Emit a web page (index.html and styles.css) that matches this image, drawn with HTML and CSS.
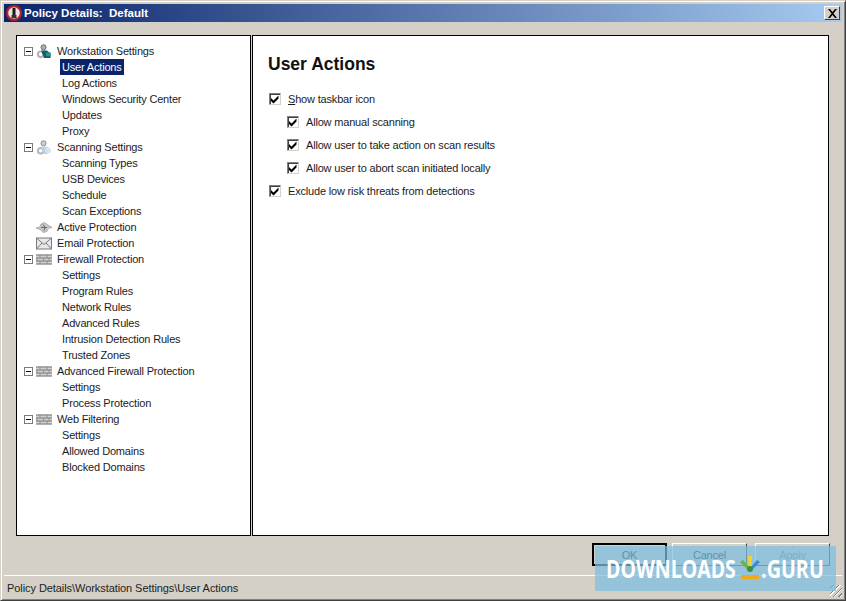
FILE: index.html
```html
<!DOCTYPE html>
<html lang="en">
<head>
<meta charset="utf-8">
<title>Policy Details: Default</title>
<link rel="stylesheet" href="styles.css">
</head>
<body>
<svg class="defs" width="0" height="0" aria-hidden="true">
  <defs>
    <symbol id="minus" viewBox="0 0 9 9"><rect x=".5" y=".5" width="8" height="8" fill="#fff" stroke="#7a7a7a"/><path d="M2 4.500h5" stroke="#000"/></symbol>
    <symbol id="gears-work" viewBox="0 0 16 16">
      <circle cx="4.500" cy="11" r="3" fill="#fff" stroke="#b4b4b4" stroke-width="2.200"/>
      <circle cx="7.500" cy="3.500" r="2.700" fill="#b0b0b0" stroke="#666"/>
      <path d="M5 7h6l4 3v5H8z" fill="#0f5f66"/>
      <path d="M10 9h5v4h-5z" fill="#2c8c92"/>
    </symbol>
    <symbol id="gears-scan" viewBox="0 0 16 16">
      <circle cx="4.500" cy="11.500" r="3" fill="#fff" stroke="#b8b8b8" stroke-width="2.200"/>
      <circle cx="7.500" cy="3.500" r="2.700" fill="#cfcfcf" stroke="#888"/>
      <path d="M5 7h6l4 3v3l-4 2H8z" fill="#bcd2e4"/>
      <circle cx="12" cy="11" r="3" fill="#d4e4f2"/>
    </symbol>
    <symbol id="wall" viewBox="0 0 16 12">
      <rect x="0" y="1" width="16" height="10" fill="#d2d2d2"/>
      <path d="M0 1.500h16M0 4.500h16M0 7.500h16M0 10.500h16" stroke="#777" fill="none"/>
      <path d="M4 1v3M11 1v3M1 4.500v3M7.500 4.500v3M13 4.500v3M4 7.500v3M11 7.500v3" stroke="#8a8a8a" fill="none"/>
    </symbol>
  </defs>
</svg>
<div class="window">
  <header class="titlebar">
    <svg class="app-icon" width="16" height="16" viewBox="0 0 16 16"><circle cx="8" cy="8" r="8" fill="#b5222a"/><circle cx="8" cy="8" r="5.800" fill="#efe4e4"/><rect x="6.500" y="3" width="3" height="7" fill="#1a1a1a"/><rect x="5.500" y="10" width="5" height="3.200" fill="#333"/></svg>
    <span class="title">Policy Details:&nbsp; Default</span>
    <button class="close" type="button" aria-label="Close"><svg width="11" height="9" viewBox="0 0 11 9"><path d="M1 0h2l2.500 3L8 0h2L6.500 4.500 10 9H8L5.500 6 3 9H1l3.500-4.500z" fill="#000"/></svg></button>
  </header>

  <div class="panes">
    <nav class="tree">
      <div class="row"><svg class="tog"><use href="#minus"/></svg><svg class="ico"><use href="#gears-work"/></svg><span class="rtext">Workstation Settings</span></div>
      <div class="row child"><span class="rtext sel">User Actions</span></div>
      <div class="row child"><span class="rtext">Log Actions</span></div>
      <div class="row child"><span class="rtext">Windows Security Center</span></div>
      <div class="row child"><span class="rtext">Updates</span></div>
      <div class="row child"><span class="rtext">Proxy</span></div>
      <div class="row"><svg class="tog"><use href="#minus"/></svg><svg class="ico"><use href="#gears-scan"/></svg><span class="rtext">Scanning Settings</span></div>
      <div class="row child"><span class="rtext">Scanning Types</span></div>
      <div class="row child"><span class="rtext">USB Devices</span></div>
      <div class="row child"><span class="rtext">Schedule</span></div>
      <div class="row child"><span class="rtext">Scan Exceptions</span></div>
      <div class="row leaf"><svg class="ico" viewBox="0 0 16 12"><path d="M0 6.500l4-1 1-3 4-1.500 2 2 5 3-4 1-1 3-4 1-2-2.500z" fill="#c8c8c8" stroke="#9a9a9a" stroke-width=".7"/><path d="M7 3l2 3-1 3M5 6h6" stroke="#666" fill="none"/></svg><span class="rtext">Active Protection</span></div>
      <div class="row leaf"><svg class="ico" viewBox="0 0 16 12"><rect x=".5" y=".5" width="15" height="11" fill="#e8e8e8" stroke="#7a7a7a"/><path d="M.5 .5L8 7l7.500-6.500M.5 11.500L6 5.500M15.500 11.500L10 5.500" fill="none" stroke="#7a7a7a"/></svg><span class="rtext">Email Protection</span></div>
      <div class="row"><svg class="tog"><use href="#minus"/></svg><svg class="ico"><use href="#wall"/></svg><span class="rtext">Firewall Protection</span></div>
      <div class="row child"><span class="rtext">Settings</span></div>
      <div class="row child"><span class="rtext">Program Rules</span></div>
      <div class="row child"><span class="rtext">Network Rules</span></div>
      <div class="row child"><span class="rtext">Advanced Rules</span></div>
      <div class="row child"><span class="rtext">Intrusion Detection Rules</span></div>
      <div class="row child"><span class="rtext">Trusted Zones</span></div>
      <div class="row"><svg class="tog"><use href="#minus"/></svg><svg class="ico"><use href="#wall"/></svg><span class="rtext">Advanced Firewall Protection</span></div>
      <div class="row child"><span class="rtext">Settings</span></div>
      <div class="row child"><span class="rtext">Process Protection</span></div>
      <div class="row"><svg class="tog"><use href="#minus"/></svg><svg class="ico"><use href="#wall"/></svg><span class="rtext">Web Filtering</span></div>
      <div class="row child"><span class="rtext">Settings</span></div>
      <div class="row child"><span class="rtext">Allowed Domains</span></div>
      <div class="row child"><span class="rtext">Blocked Domains</span></div>
    </nav>
    <main class="content">
      <h1 class="heading">User Actions</h1>
      <div class="options">
        <label class="opt"><span class="box"></span><span><u>S</u>how taskbar icon</span></label>
        <label class="opt sub"><span class="box"></span><span>Allow manual scanning</span></label>
        <label class="opt sub"><span class="box"></span><span>Allow user to take action on scan results</span></label>
        <label class="opt sub"><span class="box"></span><span>Allow user to abort scan initiated locally</span></label>
        <label class="opt"><span class="box"></span><span>Exclude low risk threats from detections</span></label>
      </div>
    </main>
  </div>

  <div class="actions">
    <button class="btn default" type="button">OK</button>
    <button class="btn" type="button">Cancel</button>
    <button class="btn off" type="button">Apply</button>
  </div>

  <footer class="status">Policy Details\Workstation Settings\User Actions</footer>

  <div class="grip"></div>
  <div class="mark">
    <span class="mark-text mark-a">DOWNLOADS</span>
    <svg class="mark-logo" width="20" height="26" viewBox="0 0 20 26"><path d="M8 0h4l-.5 11h-3z" fill="#f4d32e"/><path d="M0 6l3-2 6 7-1.500 2.500z" fill="#6cb33f"/><path d="M20 6l-3-2-6 7 1.500 2.500z" fill="#2f8fdc"/><circle cx="10" cy="13" r="3" fill="#3d8f3f"/><rect x="1" y="19" width="18" height="4" fill="#f0a81e"/></svg>
    <span class="mark-text mark-b">.GURU</span>
  </div>
</div>
</body>
</html>
```

FILE: styles.css
```css
* { box-sizing: border-box; }
html, body { margin: 0; padding: 0; }
body {
  width: 846px;
  height: 601px;
  overflow: hidden;
  font-family: "Liberation Sans", Arial, sans-serif;
  font-size: 11px;
  letter-spacing: -0.18px;
  color: #000;
}
.defs { position: absolute; }
.window {
  position: relative;
  width: 846px;
  height: 601px;
  display: flex;
  flex-direction: column;
  background: #d4d0c8;
  border: 1px solid;
  border-color: #d4d0c8 #404040 #404040 #d4d0c8;
  box-shadow: inset 1px 1px 0 #fff, inset -1px -1px 0 #808080;
  padding: 3px 3px 2px 3px;
}
.titlebar {
  height: 18px;
  display: flex;
  align-items: center;
  gap: 2px;
  padding: 0 2px;
  background: linear-gradient(to right, #0a246a, #a6caf0);
  color: #fff;
  flex: none;
}
.app-icon { flex: none; margin-left: 0; }
.title {
  flex: 1;
  font-weight: 700;
  font-size: 11.5px;
  letter-spacing: 0;
  white-space: nowrap;
}
.close {
  width: 16px;
  height: 14px;
  padding: 0;
  display: flex;
  align-items: center;
  justify-content: center;
  background: #d4d0c8;
  border: 1px solid;
  border-color: #fff #404040 #404040 #fff;
}
.panes {
  margin: 13px 0 0 12px;
  width: 813px;
  height: 501px;
  display: flex;
  gap: 1px;
  flex: none;
}
.tree {
  width: 235px;
  background: #fff;
  border: 1px solid #000;
  padding: 7px 0 0 7px;
}
.row {
  height: 16px;
  display: flex;
  align-items: center;
  white-space: nowrap;
  color: #1c1c1c;
}
.tog { width: 9px; height: 9px; flex: none; margin-right: 3px; }
.ico { width: 16px; height: 15px; flex: none; margin-right: 3px; }
.leaf { padding-left: 12px; }
.child { padding-left: 36px; }
.rtext { padding: 1px 2px; line-height: 14px; }
.sel { background: #0a246a; color: #fff; }
.content {
  flex: 1;
  background: #fff;
  border: 1px solid #000;
  padding: 18px 15px;
}
.heading {
  margin: 0 0 18px;
  font-size: 17.5px;
  line-height: 20px;
  letter-spacing: 0;
  font-weight: 700;
  color: #111;
}
.options { display: flex; flex-direction: column; gap: 10px; }
.opt {
  height: 13px;
  display: flex;
  align-items: center;
  gap: 7px;
  color: #1c1c1c;
  white-space: nowrap;
}
.sub { margin-left: 18px; }
.box {
  width: 12px;
  height: 12px;
  margin-left: 1px;
  flex: none;
  background:
    url("data:image/svg+xml,%3Csvg xmlns='http://www.w3.org/2000/svg' width='10' height='10'%3E%3Cpath d='M1 4l2.500 2.500 5-5v3l-5 5-2.500-2.500z' fill='%23000'/%3E%3C/svg%3E") center no-repeat,
    #fff;
  border: 1px solid;
  border-color: #808080 #d4d0c8 #d4d0c8 #808080;
  box-shadow: inset 1px 1px 0 #404040;
}
.actions {
  height: 39px;
  padding: 7px 12px 0 0;
  display: flex;
  justify-content: flex-end;
  gap: 5px;
  flex: none;
}
.btn {
  width: 75px;
  height: 23px;
  font: 11px "Liberation Sans", Arial, sans-serif;
  letter-spacing: -0.18px;
  background: #d4d0c8;
  color: #111;
  border: 1px solid;
  border-color: #fff #404040 #404040 #fff;
  padding: 0;
}
.btn.default { border: 2px solid #000; }
.btn.off { color: #808080; margin-left: 3px; }
.status {
  flex: 1;
  border-top: 1px solid #fff;
  padding: 5px 0 0 3px;
  line-height: 14px;
  letter-spacing: -0.07px;
  color: #222;
}
.grip {
  position: absolute;
  right: 3px;
  bottom: 3px;
  width: 12px;
  height: 12px;
  background: repeating-linear-gradient(135deg, transparent 0 2px, #808080 2px 3px, #fff 3px 4px);
}
.mark {
  position: absolute;
  left: 594px;
  top: 545px;
  width: 241px;
  height: 45px;
  display: flex;
  align-items: center;
  padding-left: 11px;
  background: rgba(125, 190, 225, 0.72);
}
.mark-text {
  display: block;
  flex: none;
  color: #fff;
  font: 700 25px/1 "Open Sans", sans-serif;
  letter-spacing: 0;
  white-space: nowrap;
  transform-origin: left center;
}
.mark-a { width: 134px; transform: scaleX(0.78); }
.mark-b { width: 60px; margin-left: 1px; transform: scaleX(0.79); }
.mark-logo { flex: none; }
```
